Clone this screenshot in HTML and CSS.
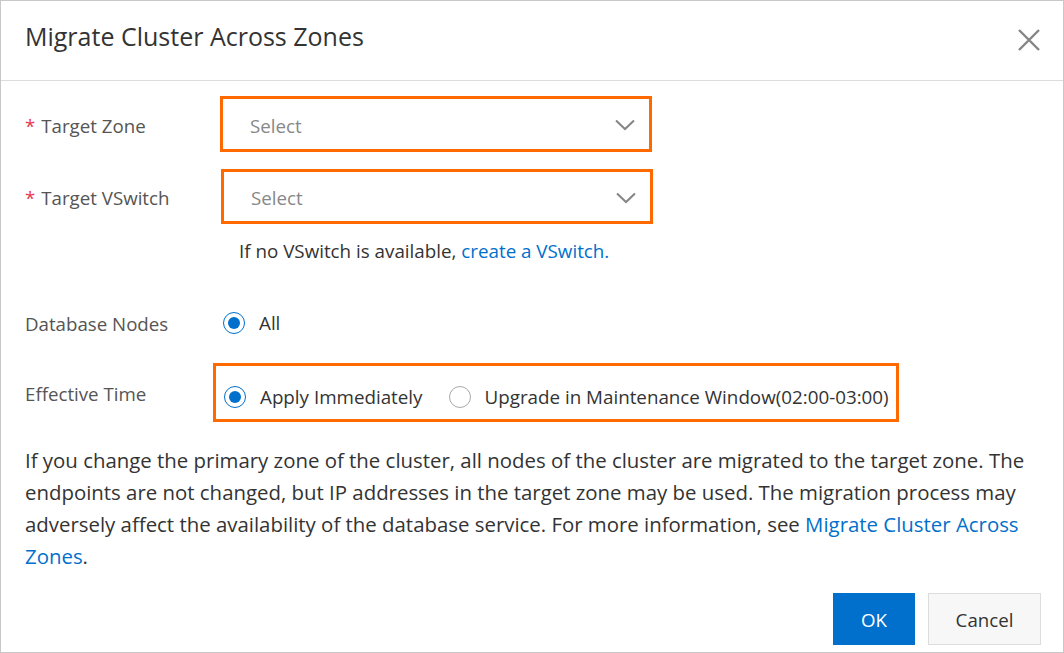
FILE: index.html
```html
<!DOCTYPE html>
<html>
<head>
<meta charset="utf-8">
<link rel="stylesheet" href="styles.css">
</head>
<body>
<div class="dialog">
  <div class="header">
    <div class="title">Migrate Cluster Across Zones</div>
    <svg class="close" width="24" height="24" viewBox="0 0 24 24"><path d="M2 2 L22 22 M22 2 L2 22" stroke="#858585" stroke-width="2.4" fill="none"/></svg>
  </div>
  <div class="content">
    <div class="row row-zone">
      <div class="label"><span class="req">*</span>Target Zone</div>
      <div class="select">
        <span class="placeholder">Select</span>
        <svg class="chev" width="20" height="12" viewBox="0 0 20 12"><path d="M1 1.5 L10 10 L19 1.5" stroke="#858585" stroke-width="2" fill="none"/></svg>
      </div>
    </div>
    <div class="row row-vsw">
      <div class="label"><span class="req">*</span>Target VSwitch</div>
      <div class="select select2">
        <span class="placeholder">Select</span>
        <svg class="chev" width="20" height="12" viewBox="0 0 20 12"><path d="M1 1.5 L10 10 L19 1.5" stroke="#858585" stroke-width="2" fill="none"/></svg>
      </div>
    </div>
    <div class="hint">If no VSwitch is available, <a class="link">create a VSwitch.</a></div>
    <div class="row row-nodes">
      <div class="label">Database Nodes</div>
      <div class="radio-group">
        <span class="radio checked"></span><span class="rtext">All</span>
      </div>
    </div>
    <div class="row row-time">
      <div class="label">Effective Time</div>
      <div class="radio-box">
        <span class="radio checked"></span><span class="rtext">Apply Immediately</span>
        <span class="radio second"></span><span class="rtext">Upgrade in Maintenance Window(02:00-03:00)</span>
      </div>
    </div>
    <p class="desc">If you change the primary zone of the cluster, all nodes of the cluster are migrated to the target zone. The endpoints are not changed, but IP addresses in the target zone may be used. The migration process may adversely affect the availability of the database service. For more information, see <a class="link">Migrate Cluster Across Zones</a>.</p>
  </div>
  <div class="footer">
    <button class="btn ok">OK</button>
    <button class="btn cancel">Cancel</button>
  </div>
</div>
</body>
</html>
```
FILE: styles.css
```css
html, body { margin: 0; padding: 0; background: #fff; }
body { font-family: "Open Sans", "Noto Sans", sans-serif; color: #333; }
.dialog {
  width: 1064px; height: 653px; box-sizing: border-box;
  border: 1px solid #c8c8c8; display: flex; flex-direction: column;
}
.header {
  height: 80px; border-bottom: 1px solid #dcdcdc; box-sizing: border-box;
  display: flex; align-items: center; justify-content: space-between;
  padding: 0 22px 10px 24px;
}
.title { font-size: 25px; color: #333; }
.close { margin-top: 8px; }
.content { padding: 15px 0 0 24px; flex: 1; }
.row { display: flex; align-items: center; }
.label { width: 195px; font-size: 18.7px; color: #555; padding-top: 2px; }
.req { color: #e8384f; margin-right: 6px; }
.select {
  width: 432px; height: 56px; box-sizing: border-box;
  border: 3px solid #ff6a00; display: flex; align-items: center;
  justify-content: space-between; padding: 2px 14px 0 27px;
}
.select2 { height: 55px; margin-left: 1px; }
.placeholder { font-size: 18.7px; color: #888; }
.row-vsw { margin-top: 17px; }
.hint { margin: 13px 0 0 214px; font-size: 18.8px; line-height: 28px; color: #333; }
.link { color: #0070cc; text-decoration: none; }
.row-nodes { margin-top: 44px; }
.radio-group { display: flex; align-items: center; margin-left: 3px; }
.radio {
  width: 22px; height: 22px; box-sizing: border-box; border-radius: 50%;
  border: 1px solid #aaa; background: #fff; display: inline-block; position: relative;
}
.radio.checked { border-color: #0070cc; }
.radio.checked::after {
  content: ""; position: absolute; left: 4px; top: 4px; width: 12px; height: 12px;
  border-radius: 50%; background: #0070cc;
}
.rtext { font-size: 18.8px; color: #333; margin-left: 14px; }
.row-time { margin-top: 27px; align-items: center; }
.radio-box {
  margin-left: -7px; width: 686px; height: 59px; box-sizing: border-box;
  border: 3px solid #ff6a00; display: flex; align-items: center; padding: 8px 0 0 8px;
}
.radio.second { margin-left: 26px; }
.desc { margin: 22px 0 0 0; width: 1010px; font-size: 20.4px; line-height: 32px; color: #333; }
.footer { display: flex; justify-content: flex-end; gap: 13px; padding: 0 22px 7px 0; }
.btn {
  height: 52px; font-family: inherit; font-size: 18.7px; box-sizing: border-box; cursor: pointer;
}
.ok { width: 82px; background: #0070cc; color: #fff; border: none; }
.cancel { width: 113px; background: #f7f7f7; color: #333; border: 1px solid #dcdcdc; }
```
